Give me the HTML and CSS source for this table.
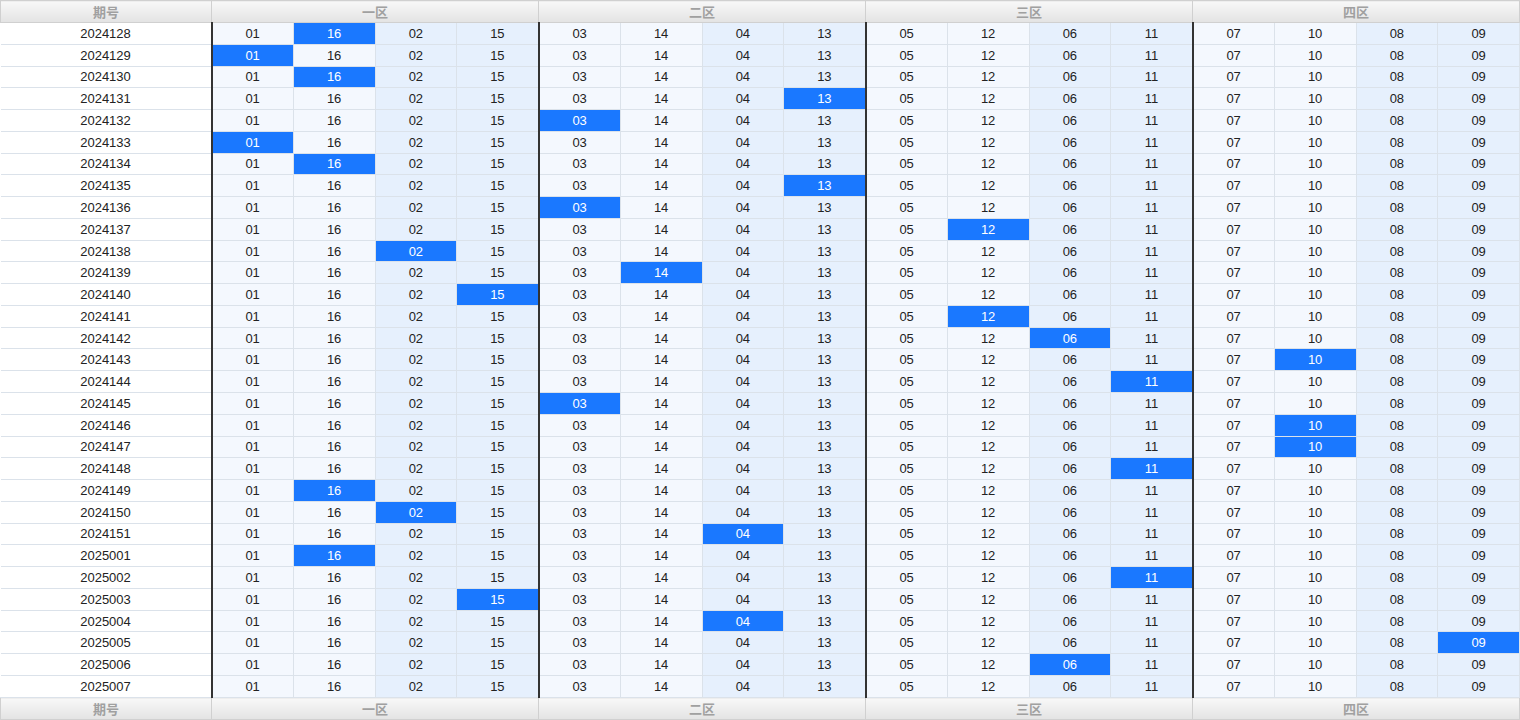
FILE: index.html
```html
<!DOCTYPE html>
<html lang="zh">
<head>
<meta charset="utf-8">
<title>分区走势</title>
<link rel="stylesheet" href="styles.css">
</head>
<body>
<table class="grid">
<colgroup><col class="c-id"><col span="16"></colgroup>
<thead>
<tr class="hd"><th>期号</th><th colspan="4" class="g">一区</th><th colspan="4" class="g">二区</th><th colspan="4" class="g">三区</th><th colspan="4" class="g">四区</th></tr>
</thead>
<tbody>
<tr><td class="id">2024128</td><td class="a g">01</td><td class="a hit">16</td><td class="b">02</td><td class="b">15</td><td class="a g">03</td><td class="a">14</td><td class="b">04</td><td class="b">13</td><td class="a g">05</td><td class="a">12</td><td class="b">06</td><td class="b">11</td><td class="a g">07</td><td class="a">10</td><td class="b">08</td><td class="b">09</td></tr>
<tr><td class="id">2024129</td><td class="a g hit">01</td><td class="a">16</td><td class="b">02</td><td class="b">15</td><td class="a g">03</td><td class="a">14</td><td class="b">04</td><td class="b">13</td><td class="a g">05</td><td class="a">12</td><td class="b">06</td><td class="b">11</td><td class="a g">07</td><td class="a">10</td><td class="b">08</td><td class="b">09</td></tr>
<tr><td class="id">2024130</td><td class="a g">01</td><td class="a hit">16</td><td class="b">02</td><td class="b">15</td><td class="a g">03</td><td class="a">14</td><td class="b">04</td><td class="b">13</td><td class="a g">05</td><td class="a">12</td><td class="b">06</td><td class="b">11</td><td class="a g">07</td><td class="a">10</td><td class="b">08</td><td class="b">09</td></tr>
<tr><td class="id">2024131</td><td class="a g">01</td><td class="a">16</td><td class="b">02</td><td class="b">15</td><td class="a g">03</td><td class="a">14</td><td class="b">04</td><td class="b hit">13</td><td class="a g">05</td><td class="a">12</td><td class="b">06</td><td class="b">11</td><td class="a g">07</td><td class="a">10</td><td class="b">08</td><td class="b">09</td></tr>
<tr><td class="id">2024132</td><td class="a g">01</td><td class="a">16</td><td class="b">02</td><td class="b">15</td><td class="a g hit">03</td><td class="a">14</td><td class="b">04</td><td class="b">13</td><td class="a g">05</td><td class="a">12</td><td class="b">06</td><td class="b">11</td><td class="a g">07</td><td class="a">10</td><td class="b">08</td><td class="b">09</td></tr>
<tr><td class="id">2024133</td><td class="a g hit">01</td><td class="a">16</td><td class="b">02</td><td class="b">15</td><td class="a g">03</td><td class="a">14</td><td class="b">04</td><td class="b">13</td><td class="a g">05</td><td class="a">12</td><td class="b">06</td><td class="b">11</td><td class="a g">07</td><td class="a">10</td><td class="b">08</td><td class="b">09</td></tr>
<tr><td class="id">2024134</td><td class="a g">01</td><td class="a hit">16</td><td class="b">02</td><td class="b">15</td><td class="a g">03</td><td class="a">14</td><td class="b">04</td><td class="b">13</td><td class="a g">05</td><td class="a">12</td><td class="b">06</td><td class="b">11</td><td class="a g">07</td><td class="a">10</td><td class="b">08</td><td class="b">09</td></tr>
<tr><td class="id">2024135</td><td class="a g">01</td><td class="a">16</td><td class="b">02</td><td class="b">15</td><td class="a g">03</td><td class="a">14</td><td class="b">04</td><td class="b hit">13</td><td class="a g">05</td><td class="a">12</td><td class="b">06</td><td class="b">11</td><td class="a g">07</td><td class="a">10</td><td class="b">08</td><td class="b">09</td></tr>
<tr><td class="id">2024136</td><td class="a g">01</td><td class="a">16</td><td class="b">02</td><td class="b">15</td><td class="a g hit">03</td><td class="a">14</td><td class="b">04</td><td class="b">13</td><td class="a g">05</td><td class="a">12</td><td class="b">06</td><td class="b">11</td><td class="a g">07</td><td class="a">10</td><td class="b">08</td><td class="b">09</td></tr>
<tr><td class="id">2024137</td><td class="a g">01</td><td class="a">16</td><td class="b">02</td><td class="b">15</td><td class="a g">03</td><td class="a">14</td><td class="b">04</td><td class="b">13</td><td class="a g">05</td><td class="a hit">12</td><td class="b">06</td><td class="b">11</td><td class="a g">07</td><td class="a">10</td><td class="b">08</td><td class="b">09</td></tr>
<tr><td class="id">2024138</td><td class="a g">01</td><td class="a">16</td><td class="b hit">02</td><td class="b">15</td><td class="a g">03</td><td class="a">14</td><td class="b">04</td><td class="b">13</td><td class="a g">05</td><td class="a">12</td><td class="b">06</td><td class="b">11</td><td class="a g">07</td><td class="a">10</td><td class="b">08</td><td class="b">09</td></tr>
<tr><td class="id">2024139</td><td class="a g">01</td><td class="a">16</td><td class="b">02</td><td class="b">15</td><td class="a g">03</td><td class="a hit">14</td><td class="b">04</td><td class="b">13</td><td class="a g">05</td><td class="a">12</td><td class="b">06</td><td class="b">11</td><td class="a g">07</td><td class="a">10</td><td class="b">08</td><td class="b">09</td></tr>
<tr><td class="id">2024140</td><td class="a g">01</td><td class="a">16</td><td class="b">02</td><td class="b hit">15</td><td class="a g">03</td><td class="a">14</td><td class="b">04</td><td class="b">13</td><td class="a g">05</td><td class="a">12</td><td class="b">06</td><td class="b">11</td><td class="a g">07</td><td class="a">10</td><td class="b">08</td><td class="b">09</td></tr>
<tr><td class="id">2024141</td><td class="a g">01</td><td class="a">16</td><td class="b">02</td><td class="b">15</td><td class="a g">03</td><td class="a">14</td><td class="b">04</td><td class="b">13</td><td class="a g">05</td><td class="a hit">12</td><td class="b">06</td><td class="b">11</td><td class="a g">07</td><td class="a">10</td><td class="b">08</td><td class="b">09</td></tr>
<tr><td class="id">2024142</td><td class="a g">01</td><td class="a">16</td><td class="b">02</td><td class="b">15</td><td class="a g">03</td><td class="a">14</td><td class="b">04</td><td class="b">13</td><td class="a g">05</td><td class="a">12</td><td class="b hit">06</td><td class="b">11</td><td class="a g">07</td><td class="a">10</td><td class="b">08</td><td class="b">09</td></tr>
<tr><td class="id">2024143</td><td class="a g">01</td><td class="a">16</td><td class="b">02</td><td class="b">15</td><td class="a g">03</td><td class="a">14</td><td class="b">04</td><td class="b">13</td><td class="a g">05</td><td class="a">12</td><td class="b">06</td><td class="b">11</td><td class="a g">07</td><td class="a hit">10</td><td class="b">08</td><td class="b">09</td></tr>
<tr><td class="id">2024144</td><td class="a g">01</td><td class="a">16</td><td class="b">02</td><td class="b">15</td><td class="a g">03</td><td class="a">14</td><td class="b">04</td><td class="b">13</td><td class="a g">05</td><td class="a">12</td><td class="b">06</td><td class="b hit">11</td><td class="a g">07</td><td class="a">10</td><td class="b">08</td><td class="b">09</td></tr>
<tr><td class="id">2024145</td><td class="a g">01</td><td class="a">16</td><td class="b">02</td><td class="b">15</td><td class="a g hit">03</td><td class="a">14</td><td class="b">04</td><td class="b">13</td><td class="a g">05</td><td class="a">12</td><td class="b">06</td><td class="b">11</td><td class="a g">07</td><td class="a">10</td><td class="b">08</td><td class="b">09</td></tr>
<tr><td class="id">2024146</td><td class="a g">01</td><td class="a">16</td><td class="b">02</td><td class="b">15</td><td class="a g">03</td><td class="a">14</td><td class="b">04</td><td class="b">13</td><td class="a g">05</td><td class="a">12</td><td class="b">06</td><td class="b">11</td><td class="a g">07</td><td class="a hit">10</td><td class="b">08</td><td class="b">09</td></tr>
<tr><td class="id">2024147</td><td class="a g">01</td><td class="a">16</td><td class="b">02</td><td class="b">15</td><td class="a g">03</td><td class="a">14</td><td class="b">04</td><td class="b">13</td><td class="a g">05</td><td class="a">12</td><td class="b">06</td><td class="b">11</td><td class="a g">07</td><td class="a hit">10</td><td class="b">08</td><td class="b">09</td></tr>
<tr><td class="id">2024148</td><td class="a g">01</td><td class="a">16</td><td class="b">02</td><td class="b">15</td><td class="a g">03</td><td class="a">14</td><td class="b">04</td><td class="b">13</td><td class="a g">05</td><td class="a">12</td><td class="b">06</td><td class="b hit">11</td><td class="a g">07</td><td class="a">10</td><td class="b">08</td><td class="b">09</td></tr>
<tr><td class="id">2024149</td><td class="a g">01</td><td class="a hit">16</td><td class="b">02</td><td class="b">15</td><td class="a g">03</td><td class="a">14</td><td class="b">04</td><td class="b">13</td><td class="a g">05</td><td class="a">12</td><td class="b">06</td><td class="b">11</td><td class="a g">07</td><td class="a">10</td><td class="b">08</td><td class="b">09</td></tr>
<tr><td class="id">2024150</td><td class="a g">01</td><td class="a">16</td><td class="b hit">02</td><td class="b">15</td><td class="a g">03</td><td class="a">14</td><td class="b">04</td><td class="b">13</td><td class="a g">05</td><td class="a">12</td><td class="b">06</td><td class="b">11</td><td class="a g">07</td><td class="a">10</td><td class="b">08</td><td class="b">09</td></tr>
<tr><td class="id">2024151</td><td class="a g">01</td><td class="a">16</td><td class="b">02</td><td class="b">15</td><td class="a g">03</td><td class="a">14</td><td class="b hit">04</td><td class="b">13</td><td class="a g">05</td><td class="a">12</td><td class="b">06</td><td class="b">11</td><td class="a g">07</td><td class="a">10</td><td class="b">08</td><td class="b">09</td></tr>
<tr><td class="id">2025001</td><td class="a g">01</td><td class="a hit">16</td><td class="b">02</td><td class="b">15</td><td class="a g">03</td><td class="a">14</td><td class="b">04</td><td class="b">13</td><td class="a g">05</td><td class="a">12</td><td class="b">06</td><td class="b">11</td><td class="a g">07</td><td class="a">10</td><td class="b">08</td><td class="b">09</td></tr>
<tr><td class="id">2025002</td><td class="a g">01</td><td class="a">16</td><td class="b">02</td><td class="b">15</td><td class="a g">03</td><td class="a">14</td><td class="b">04</td><td class="b">13</td><td class="a g">05</td><td class="a">12</td><td class="b">06</td><td class="b hit">11</td><td class="a g">07</td><td class="a">10</td><td class="b">08</td><td class="b">09</td></tr>
<tr><td class="id">2025003</td><td class="a g">01</td><td class="a">16</td><td class="b">02</td><td class="b hit">15</td><td class="a g">03</td><td class="a">14</td><td class="b">04</td><td class="b">13</td><td class="a g">05</td><td class="a">12</td><td class="b">06</td><td class="b">11</td><td class="a g">07</td><td class="a">10</td><td class="b">08</td><td class="b">09</td></tr>
<tr><td class="id">2025004</td><td class="a g">01</td><td class="a">16</td><td class="b">02</td><td class="b">15</td><td class="a g">03</td><td class="a">14</td><td class="b hit">04</td><td class="b">13</td><td class="a g">05</td><td class="a">12</td><td class="b">06</td><td class="b">11</td><td class="a g">07</td><td class="a">10</td><td class="b">08</td><td class="b">09</td></tr>
<tr><td class="id">2025005</td><td class="a g">01</td><td class="a">16</td><td class="b">02</td><td class="b">15</td><td class="a g">03</td><td class="a">14</td><td class="b">04</td><td class="b">13</td><td class="a g">05</td><td class="a">12</td><td class="b">06</td><td class="b">11</td><td class="a g">07</td><td class="a">10</td><td class="b">08</td><td class="b hit">09</td></tr>
<tr><td class="id">2025006</td><td class="a g">01</td><td class="a">16</td><td class="b">02</td><td class="b">15</td><td class="a g">03</td><td class="a">14</td><td class="b">04</td><td class="b">13</td><td class="a g">05</td><td class="a">12</td><td class="b hit">06</td><td class="b">11</td><td class="a g">07</td><td class="a">10</td><td class="b">08</td><td class="b">09</td></tr>
<tr><td class="id">2025007</td><td class="a g">01</td><td class="a">16</td><td class="b">02</td><td class="b">15</td><td class="a g">03</td><td class="a">14</td><td class="b">04</td><td class="b">13</td><td class="a g">05</td><td class="a">12</td><td class="b">06</td><td class="b">11</td><td class="a g">07</td><td class="a">10</td><td class="b">08</td><td class="b">09</td></tr>
</tbody>
<tfoot>
<tr class="hd"><th>期号</th><th colspan="4" class="g">一区</th><th colspan="4" class="g">二区</th><th colspan="4" class="g">三区</th><th colspan="4" class="g">四区</th></tr>
</tfoot>
</table>
</body>
</html>
```

FILE: styles.css
```css
html, body {
  margin: 0;
  padding: 0;
  background: #ffffff;
  overflow: hidden;
}

.grid {
  width: 1520px;
  height: 720px;
  border-collapse: collapse;
  table-layout: fixed;
  font-family: "Liberation Sans", Arial, "Noto Sans CJK SC", sans-serif;
  font-size: 13px;
  color: #222;
}

.grid .c-id {
  width: 211px;
}

.hd th {
  height: 21px;
  padding: 0;
  background: linear-gradient(#f8f8f8, #e3e3e3);
  border: 1px solid #d0d0d0;
  color: #a0a0a0;
  font-family: "Noto Sans CJK SC", sans-serif;
  font-size: 13px;
  font-weight: bold;
  text-align: center;
  line-height: 20px;
}

.grid td {
  height: 19px;
  padding: 1px 0 0;
  text-align: center;
  border: 1px solid #dbe2ea;
  line-height: 18px;
}

.grid td.id {
  background: #ffffff;
  border-left: none;
}

.grid td.a {
  background: #f4f8fe;
}

.grid td.b {
  background: #e6f0fd;
}

.grid td.g {
  border-left: 2px solid #333333;
}

.grid th.g {
  border-left: 1px solid #d0d0d0;
}

.grid td.hit {
  background: #1a78ff;
  color: #ffffff;
}
```
